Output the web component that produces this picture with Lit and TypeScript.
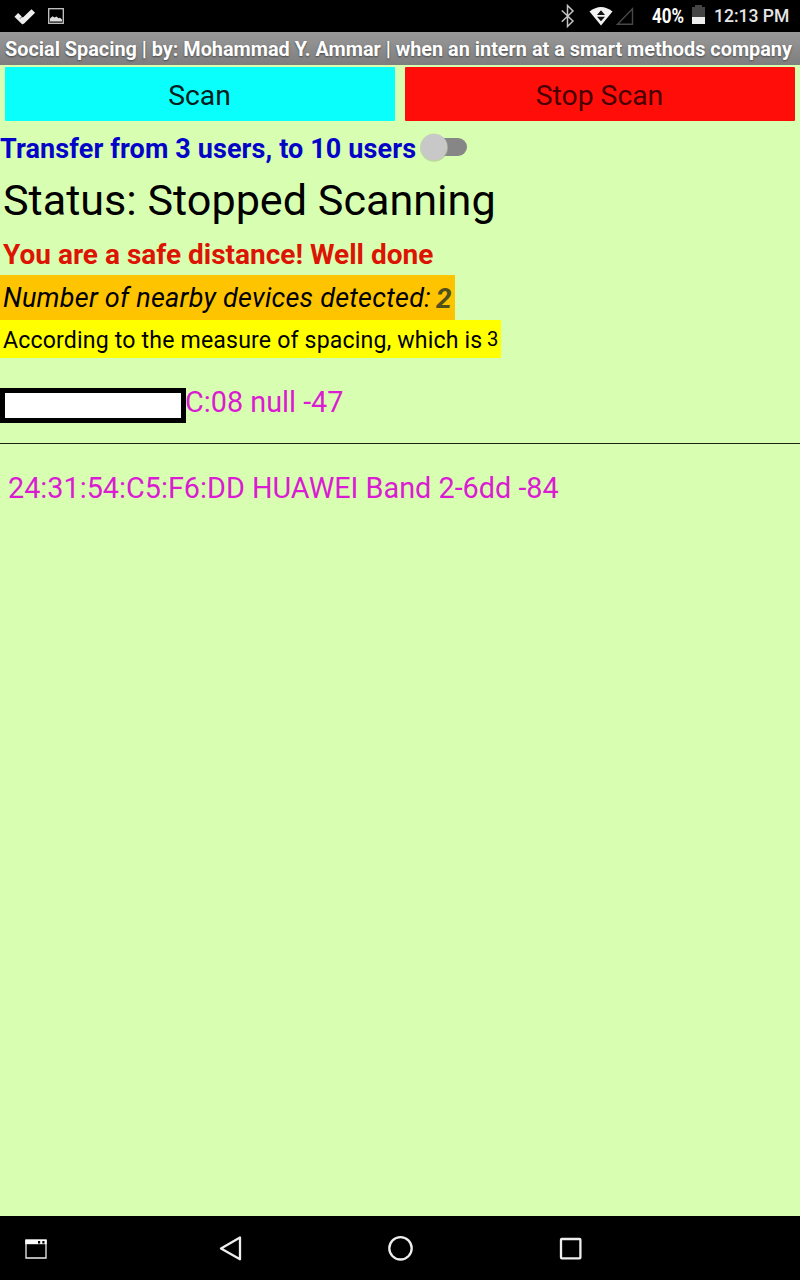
import { LitElement, html, css } from "lit";
import { customElement, state } from "lit/decorators.js";

@customElement("status-bar")
class StatusBar extends LitElement {
  static styles = css`
    :host { display: flex; height: 32px; background: #000; color: #e6e6e6; font-size: 17.5px; line-height: 33px; }
    svg { display: block; flex: none; }
    .left { width: 540px; }
    .right { width: 112px; }
    .percent { width: 39px; color: #fff; font: bold 19.5px/34px Roboto, sans-serif; white-space: nowrap; }
    .percent span { display: inline-block; transform: scaleX(0.87); transform-origin: 0 50%; }
    .time { white-space: nowrap; margin-left: 7px; font-weight: 500; }
  `;
  render() {
    return html`
      <svg class="left" width="540" height="32" viewBox="0 0 540 32">
        <path d="M16.3 14.8 24.2 22.7M21.8 22.2 33.3 11" stroke="#eee" stroke-width="5.2" fill="none" />
        <path d="M19.8 18.8 23.6 15" stroke="#000" stroke-width="1" fill="none" opacity=".6" />
        <rect x="48.7" y="8.7" width="14.6" height="14.6" fill="none" stroke="#c8c8c8" stroke-width="1.3" />
        <path d="M50 21.5V18.5L52.5 16.3 54.5 17.5 56.5 16.5 58.5 18.3 60 17.8 62 19.5V21.5Z" fill="#ddd" />
      </svg>
      <svg class="right" width="112" height="32" viewBox="0 0 112 32">
        <path d="M21.8 10.5 33 21 27.5 26.5V5.5L33 11 21.8 21.7" stroke="#c4c4c4" stroke-width="1.5" fill="none" />
        <path d="M49.5 11.5Q61 2.5 72.5 11.5L61 25.5Z" fill="#f2f2f2" />
        <path d="M61 10.3 65 15H57ZM57 16.7H65L61 21.2Z" fill="#111" />
        <path d="M92.5 8.8V24.2H77.5Z" fill="none" stroke="#484848" stroke-width="1.4" />
      </svg>
      <div class="percent"><span>40%</span></div>
      <svg width="16" height="32" viewBox="0 0 16 32">
        <path d="M1 7H4V5H11V7H14V17H1Z" fill="#444" />
        <path d="M1 17H14V24H1Z" fill="#eee" />
      </svg>
      <div class="time">12:13 PM</div>
    `;
  }
}

@customElement("nav-bar")
class NavBar extends LitElement {
  static styles = css`
    :host { display: block; height: 64px; background: #000; }
    svg { display: block; }
  `;
  render() {
    return html`
      <svg width="800" height="64" viewBox="0 0 800 64" fill="none" stroke="#eee">
        <path d="M26 24V42H46V24" stroke-width="1.3" />
        <path d="M25.3 23.3H46.7V28.2H25.3Z" fill="#fff" stroke="none" />
        <path d="M38 25H40.2V27.5H38ZM42.3 25H44.5V27.5H42.3Z" fill="#000" stroke="none" />
        <path d="M240 21.7V43.5L221 32.6Z" transform="translate(0 -.2)" stroke-width="2.3" stroke-linejoin="round" />
        <circle cx="400.5" cy="32.3" r="11.2" stroke-width="2.3" />
        <rect x="561" y="23" width="19.4" height="19.4" rx=".8" stroke-width="2.3" />
      </svg>
    `;
  }
}

@customElement("app-root")
class AppRoot extends LitElement {
  @state() on = false;

  static styles = css`
    :host { display: flex; flex-direction: column; width: 800px; height: 1280px; overflow: hidden;
      background: #d8ffb1; color: #000; font-family: Roboto, "Liberation Sans", sans-serif; }
    div, button { box-sizing: border-box; white-space: nowrap; }
    .title { height: 33px; padding-left: 5px; background: linear-gradient(#999, #7e7e7e); color: #fff;
      font-weight: bold; font-size: 19.85px; line-height: 35px; text-shadow: 0 1px 2px #444; }
    .buttons { display: flex; gap: 10px; height: 57px; padding: 2px 5px 1px; }
    button { flex: 1; border: 0; border-radius: 1px; padding: 2px 3px 0 2px; font: 28.3px/54px Roboto, sans-serif; height: 54px; }
    .scan { background: #08fffb; color: #002020; }
    .stop { background: #ff0e09; color: #480000; }
    .transfer { display: flex; height: 53px; color: #0404c8; font-weight: bold; font-size: 27px; letter-spacing: .11px; line-height: 54px; }
    .label { width: 419px; }
    .status { height: 59px; padding-left: 3px; font-size: 43.15px; line-height: 51px; }
    .safe { height: 41px; padding-left: 3px; font-weight: bold; font-size: 28px; line-height: 42px; color: #dc1404; }
    .nearby { display: flex; width: 455px; height: 45px; padding-left: 3px; background: #ffc400;
      font-style: italic; font-size: 27px; line-height: 46px; }
    .nearby .text { width: 433px; letter-spacing: .24px; }
    .count { font-weight: bold; font-size: 28px; line-height: 48px; color: #50501c; }
    .measure { display: flex; width: 501px; height: 38px; padding-left: 3px; background: #ff0; font-size: 23.1px; line-height: 41px; }
    .measure .text { width: 484px; letter-spacing: .17px; }
    .limit { font-size: 20.3px; line-height: 38px; }
    .device { height: 86px; padding-left: 8px; color: #da1cd2; font-size: 28.8px; line-height: 88px; }
    .first { display: flex; padding: 0; border-bottom: 1px solid #1c2414; }
    .first .name { margin-left: -1px; }
    .mask { width: 186px; height: 35px; margin-top: 30px; border: 5px solid #000; background: #fff; }
    .space { flex: 1; }
  `;

  render() {
    return html`
      <status-bar></status-bar>
      <div class="title"><span>Social Spacing | by: Mohammad Y. Ammar | when an intern at a smart methods company</span></div>
      <div class="buttons">
        <button class="scan">Scan</button>
        <button class="stop">Stop Scan</button>
      </div>
      <div class="transfer">
        <div class="label">Transfer from 3 users, to 10 users</div>
        <svg width="52" height="50" viewBox="0 0 52 50" @click=${() => (this.on = !this.on)}>
          <rect x="6" y="16" width="42" height="18" rx="9" fill="#868686" />
          <circle cx=${this.on ? 36 : 15} cy="25.8" r="14" fill="#a9bf90" opacity=".6" />
          <circle cx=${this.on ? 36 : 15} cy="25" r="13.3" fill="#c8c8c8" />
        </svg>
      </div>
      <div class="status">Status: Stopped Scanning</div>
      <div class="safe">You are a safe distance! Well done</div>
      <div class="nearby"><div class="text">Number of nearby devices detected:</div><div class="count">2</div></div>
      <div class="measure"><div class="text">According to the measure of spacing, which is</div><div class="limit">3</div></div>
      <div class="device first"><div class="mask"></div><div class="name">C:08 null -47</div></div>
      <div class="device">24:31:54:C5:F6:DD HUAWEI Band 2-6dd -84</div>
      <div class="space"></div>
      <nav-bar></nav-bar>
    `;
  }
}
